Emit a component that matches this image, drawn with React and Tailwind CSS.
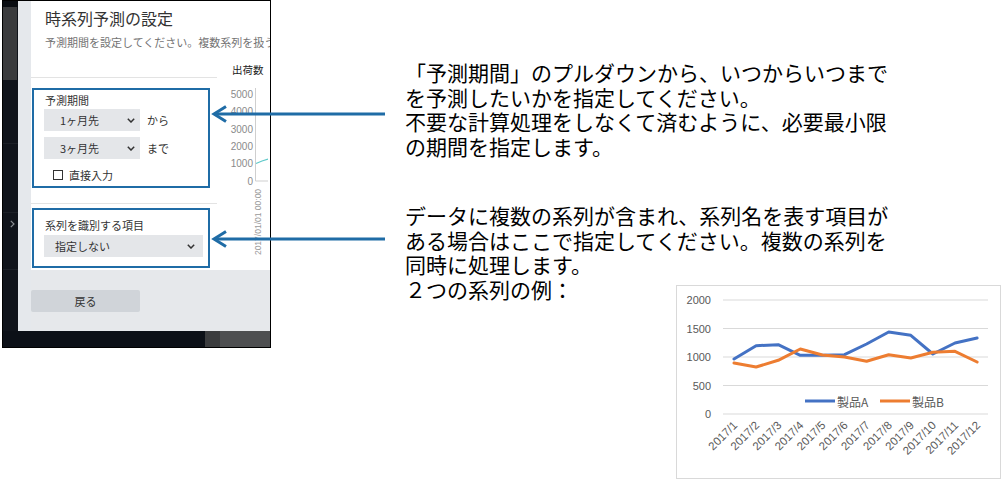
import React from "react";

const BLUE = "#1f6ca6";

const Chevron = () => (
  <svg width="8" height="5" viewBox="0 0 8 5" className="shrink-0">
    <path d="M0.8 0.8 L4 4 L7.2 0.8" fill="none" stroke="#333" strokeWidth="1.5" />
  </svg>
);

function Select({ w, pl, pr, label }) {
  return (
    <div
      className="flex items-center justify-between h-[22px] bg-[#e4e6e9] text-[11px] leading-[14px] text-[#333]"
      style={{ width: w, paddingLeft: pl, paddingRight: pr }}
    >
      <span>{label}</span>
      <Chevron />
    </div>
  );
}

function PanelChart() {
  const labels = [
    ["5000", 17],
    ["4000", 34.5],
    ["3000", 52],
    ["2000", 69],
    ["1000", 86.5],
    ["0", 104],
  ];
  return (
    <svg width="51" height="190" viewBox="0 0 51 190">
      {labels.map(([t, y]) => (
        <text
          key={t}
          x="36"
          y={y}
          textAnchor="end"
          dominantBaseline="central"
          fontSize="10"
          fill="#8a8a8a"
          fontFamily="'Liberation Sans', sans-serif"
        >
          {t}
        </text>
      ))}
      <line x1="38.5" y1="11" x2="38.5" y2="104" stroke="#cfcfcf" strokeWidth="1" />
      <line x1="38.5" y1="104" x2="51" y2="104" stroke="#cfcfcf" strokeWidth="1" />
      <polyline points="39,86.5 45,84 51,82" fill="none" stroke="#5fc9c9" strokeWidth="1.2" />
      <text
        x="41"
        y="145"
        transform="rotate(-90 41 145)"
        textAnchor="middle"
        dominantBaseline="central"
        fontSize="8.5"
        fill="#9a9a9a"
        fontFamily="'Liberation Sans', sans-serif"
      >
        2017/01/01 00:00
      </text>
    </svg>
  );
}

function Screenshot() {
  return (
    <div className="ml-[2px] w-[269px] h-[348px] shrink-0 border border-black bg-[#0d1118] flex flex-col overflow-hidden">
      <div className="flex h-[330px]">
        <div className="w-[15px] shrink-0 flex flex-col bg-[#10141b]">
          <div className="h-[6px] bg-[#0a0d12]" />
          <div className="h-[73px] w-[14px] bg-[#3a3b3d]" />
          <div className="h-[63px]" />
          <div className="h-px bg-[#1c2027]" />
          <div className="h-[68px]" />
          <div className="h-px bg-[#1c2027]" />
          <div className="h-[22px] flex items-center pl-[7px]">
            <svg width="5" height="8" viewBox="0 0 5 8">
              <path d="M0.8 0.8 L4 4 L0.8 7.2" fill="none" stroke="#8a8d92" strokeWidth="1.2" />
            </svg>
          </div>
          <div className="h-[34px]" />
          <div className="h-px bg-[#1c2027]" />
        </div>
        <div className="w-[13px] shrink-0 bg-[#e5e8ec]" />
        <div className="w-[239px] shrink-0 flex flex-col font-['Noto_Sans_CJK_JP',sans-serif]">
          <div className="h-[269px] bg-white flex flex-col overflow-hidden">
            <div className="pl-[14px] pt-[7px] text-[16px] leading-[20px] text-[#333] whitespace-nowrap">
              時系列予測の設定
            </div>
            <div className="pl-[14px] mt-[7px] text-[11px] leading-[14px] text-[#737373] whitespace-nowrap overflow-hidden">
              予測期間を設定してください。複数系列を扱う場合は系列を識別する項目を指定してください。
            </div>
            <div className="flex">
              <div className="w-[186px] shrink-0 pt-[28px] flex flex-col">
                <div className="h-px bg-[#e3e3e3]" />
                <div
                  className="mt-[10px] ml-[1px] w-[178px] h-[100px] border-2 pl-[10px] pt-[3px] flex flex-col"
                  style={{ borderColor: BLUE }}
                >
                  <div className="ml-[1px] text-[11px] leading-[14px] text-[#333]">予測期間</div>
                  <div className="mt-[2px] flex items-center gap-[7px]">
                    <Select w={96} pl={16} pr={5} label="1ヶ月先" />
                    <span className="text-[11px] text-[#333]">から</span>
                  </div>
                  <div className="mt-[6px] flex items-center gap-[7px]">
                    <Select w={96} pl={16} pr={5} label="3ヶ月先" />
                    <span className="text-[11px] text-[#333]">まで</span>
                  </div>
                  <div className="mt-[10px] flex items-center h-[12px]">
                    <div className="ml-[9px] w-[10px] h-[10px] border-[1.5px] border-[#333] bg-white" />
                    <span className="ml-[6px] text-[11px] leading-[12px] text-[#333]">直接入力</span>
                  </div>
                </div>
                <div className="mt-[15px] h-px bg-[#e3e3e3]" />
                <div
                  className="mt-[4px] ml-[1px] w-[178px] h-[60px] border-2 pl-[10px] pt-[8px] flex flex-col"
                  style={{ borderColor: BLUE }}
                >
                  <div className="ml-[1px] text-[11px] leading-[14px] text-[#333]">系列を識別する項目</div>
                  <div className="mt-[3px]">
                    <Select w={159} pl={11} pr={8} label="指定しない" />
                  </div>
                </div>
              </div>
              <div className="w-[51px] shrink-0 flex flex-col pt-[14px]">
                <div className="pl-[15px] text-[10.5px] leading-[14px] text-[#222] whitespace-nowrap">出荷数</div>
                <PanelChart />
              </div>
            </div>
          </div>
          <div className="h-[61px] bg-[#e6e8eb] pt-[20px]">
            <div className="w-[109px] h-[22px] rounded-[2px] bg-[#d0d4d9] flex items-center justify-center text-[11px] text-[#333]">
              戻る
            </div>
          </div>
        </div>
      </div>
      <div className="flex-1 flex">
        <div className="w-[202px] shrink-0 bg-[#0c1017]" />
        <div className="w-[15px] shrink-0 bg-[#3b3c3e]" />
        <div className="flex-1 bg-[#4e4f51]" />
      </div>
    </div>
  );
}

function SeriesChart() {
  const blue = [965, 1198, 1216, 1030, 1030, 1040, 1228, 1438, 1380, 1053, 1245, 1333];
  const orange = [895, 825, 942, 1140, 1035, 1000, 925, 1040, 982, 1082, 1100, 912];
  const xs = blue.map((_, i) => 57 + i * 22.1);
  const y = (v) => 128 - v * 0.057;
  const pts = (arr) => arr.map((v, i) => `${xs[i].toFixed(1)},${y(v).toFixed(1)}`).join(" ");
  const grid = [0, 500, 1000, 1500, 2000];
  const months = ["2017/1", "2017/2", "2017/3", "2017/4", "2017/5", "2017/6", "2017/7", "2017/8", "2017/9", "2017/10", "2017/11", "2017/12"];
  return (
    <svg width="323" height="192" viewBox="0 0 323 192">
      {grid.map((g) => (
        <g key={g}>
          <line x1="46" y1={y(g)} x2="311" y2={y(g)} stroke="#d9d9d9" strokeWidth="1" />
          <text
            x="34"
            y={y(g)}
            textAnchor="end"
            dominantBaseline="central"
            fontSize="11"
            fill="#595959"
            fontFamily="'Liberation Sans', sans-serif"
          >
            {g}
          </text>
        </g>
      ))}
      <polyline points={pts(blue)} fill="none" stroke="#4472c4" strokeWidth="3" strokeLinejoin="round" strokeLinecap="round" />
      <polyline points={pts(orange)} fill="none" stroke="#ed7d31" strokeWidth="3" strokeLinejoin="round" strokeLinecap="round" />
      <line x1="128" y1="115" x2="158" y2="115" stroke="#4472c4" strokeWidth="3" />
      <text x="160" y="115" dominantBaseline="central" fontSize="12" fill="#595959" fontFamily="'Noto Sans CJK JP', sans-serif">
        製品A
      </text>
      <line x1="203" y1="115" x2="233" y2="115" stroke="#ed7d31" strokeWidth="3" />
      <text x="235" y="115" dominantBaseline="central" fontSize="12" fill="#595959" fontFamily="'Noto Sans CJK JP', sans-serif">
        製品B
      </text>
      {months.map((m, i) => (
        <text
          key={m}
          transform={`translate(${(xs[i] + 4).toFixed(1)} 140) rotate(-45)`}
          textAnchor="end"
          fontSize="11.5"
          fill="#595959"
          fontFamily="'Liberation Sans', sans-serif"
        >
          {m}
        </text>
      ))}
    </svg>
  );
}

export default function App() {
  return (
    <div className="relative w-[1006px] h-[480px] bg-white overflow-hidden flex font-['Noto_Sans_CJK_JP',sans-serif]">
      <Screenshot />
      <div className="ml-[134px] pt-[60px] flex flex-col text-[21px] leading-[24.5px] text-black whitespace-nowrap">
        <div>「予測期間」のプルダウンから、いつからいつまで</div>
        <div>を予測したいかを指定してください。</div>
        <div>不要な計算処理をしなくて済むように、必要最小限</div>
        <div>の期間を指定します。</div>
        <div className="mt-[45px]">データに複数の系列が含まれ、系列名を表す項目が</div>
        <div>ある場合はここで指定してください。複数の系列を</div>
        <div>同時に処理します。</div>
        <div className="flex items-start">
          <div className="w-[271px] shrink-0">２つの系列の例：</div>
          <div className="mt-[8px] w-[325px] h-[194px] shrink-0 border border-[#d9d9d9] bg-white">
            <SeriesChart />
          </div>
        </div>
      </div>
      <svg className="absolute inset-0 pointer-events-none" width="1006" height="480" viewBox="0 0 1006 480">
        <line x1="385" y1="114" x2="215" y2="114" stroke={BLUE} strokeWidth="3" />
        <polyline points="226,106.5 214,114 226,121.5" fill="none" stroke={BLUE} strokeWidth="3" />
        <line x1="385" y1="239" x2="215" y2="239" stroke={BLUE} strokeWidth="3" />
        <polyline points="226,231.5 214,239 226,246.5" fill="none" stroke={BLUE} strokeWidth="3" />
      </svg>
    </div>
  );
}
